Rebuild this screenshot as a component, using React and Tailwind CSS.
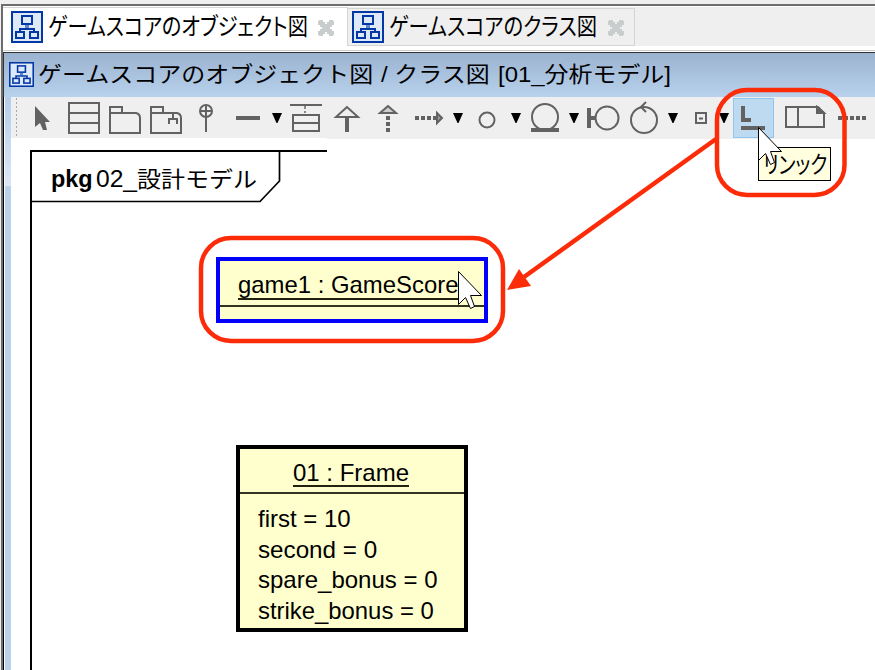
import { useLayoutEffect, useRef, useState } from "react";

const JP = "font-['Liberation_Sans','Noto_Sans_CJK_JP',sans-serif]";

// Stretches a single line of text to a given advance width.
function Fit({ w, className = "", children }) {
  const ref = useRef(null);
  const [s, setS] = useState(1);
  useLayoutEffect(() => {
    setS(w / ref.current.offsetWidth);
  }, [w]);
  return (
    <span className="block shrink-0" style={{ width: w }}>
      <span
        ref={ref}
        className={`inline-block origin-left whitespace-pre ${className}`}
        style={{ transform: `scaleX(${s})` }}
      >
        {children}
      </span>
    </span>
  );
}

function DiagramIcon({ className }) {
  return (
    <svg viewBox="0 0 32 32" className={`shrink-0 ${className}`} fill="none" stroke="#0238a5">
      <rect x="1" y="1" width="30" height="30" fill="#dde8f8" strokeWidth="2" />
      <rect x="11" y="5" width="10" height="8" strokeWidth="2" />
      <path d="M16 14v3" stroke="#5f86cc" strokeWidth="4" />
      <path d="M9 21v-3h14v3" strokeWidth="2" />
      <rect x="5" y="21" width="8" height="6" strokeWidth="2" />
      <rect x="19" y="21" width="8" height="6" strokeWidth="2" />
    </svg>
  );
}

function Close() {
  return (
    <svg viewBox="0 0 16 16" className="h-4 w-4 shrink-0" fill="#c9cdcd">
      <path d="M1 0h4v2h2v2h2V2h2V0h4v1h1v4h-2v2h-2v2h2v2h2v4h-1v1h-4v-2H9v-2H7v2H5v2H1v-1H0v-4h2V9h2V7H2V5H0V1h1z" />
    </svg>
  );
}

// A slice of the tool bar; shapes use window coordinates.
function Tool({ x, w, children }) {
  return (
    <svg
      width={w}
      height="42"
      viewBox={`${x} 97 ${w} 42`}
      className="shrink-0"
      fill="none"
      stroke="#626262"
      strokeWidth="2"
    >
      {children}
    </svg>
  );
}

function Caret({ x }) {
  return <path d={`M${x - 5} 113h10l-4.5 10h-1z`} fill="#000" stroke="none" />;
}

function Pointer({ className }) {
  return (
    <svg viewBox="0 0 26 40" className={className}>
      <path d="M1.500 1.500v33l7-7 5 11 4-2-4-11h11z" fill="#fff" stroke="#000" strokeWidth="1" />
    </svg>
  );
}

export default function App() {
  return (
    <div className={`relative flex h-[670px] w-[875px] flex-col overflow-hidden bg-[#efefef] pt-1 ${JP} text-black`}>
      <div className="ml-px flex min-h-0 flex-1 flex-col border-l-2 border-t-2 border-[#6d6d6d]">
        <div className="flex h-[47px] shrink-0 flex-col border-b border-b-[#333]">
          <div className="flex h-[40px] items-end border-t border-t-white">
            <div className="flex h-[39px] w-[345px] items-center border-r border-t border-[#d4d4d4] bg-white pl-2">
              <DiagramIcon className="-mt-px h-8 w-8" />
              <div className="ml-[5px]">
                <Fit w={260} className="text-[24px] leading-9 [font-feature-settings:'palt']">ゲームスコアのオブジェクト図</Fit>
              </div>
              <div className="ml-[10px] pt-px"><Close /></div>
            </div>
            <div className="flex h-[38px] w-[287px] items-center border-b border-r border-t border-[#d4d4d4] pl-1">
              <DiagramIcon className="h-8 w-8" />
              <div className="ml-[5px]">
                <Fit w={208} className="text-[24px] leading-9 [font-feature-settings:'palt']">ゲームスコアのクラス図</Fit>
              </div>
              <div className="ml-[11px] pt-[2px]"><Close /></div>
            </div>
          </div>
          <div className="h-1 bg-white" />
          <div className="h-px bg-[#cfcfcf]" />
          <div className="flex-1 bg-white" />
        </div>
        <div className="flex h-11 shrink-0 items-center border-l border-l-[#333] bg-linear-to-b from-[#9bb3d0] to-[#b8d1ec] pl-[5px]">
          <DiagramIcon className="-mt-px h-[25px] w-[25px]" />
          <div className="ml-1">
            <Fit w={335} className="text-[22px] leading-9">ゲームスコアのオブジェクト図</Fit>
          </div>
          <div className="ml-[8px]">
            <Fit w={109} className="text-[22px] leading-9">/ クラス図</Fit>
          </div>
          <div className="ml-[8px]">
            <Fit w={173} className="text-[22px] leading-9">[01_分析モデル]</Fit>
          </div>
        </div>
        <div className="flex min-h-0 flex-1 border-l border-l-black bg-white">
          <div className="ml-px w-[6px] shrink-0 bg-[#bad1ea]">
            <div className="h-[89px] bg-linear-to-b from-[#b3cdea] to-[#dce8f8]" />
          </div>
          <div className="flex flex-1 flex-col">
            <div className="flex h-[42px] shrink-0 bg-[#efefef]">
              <Tool x={11} w={49}>
                <path d="M16.5 98v41" strokeWidth="1" stroke="#aaa" strokeDasharray="2 2" />
                <path d="M35 106v21l5-4 3 7h4l-2-8h5z" fill="#626262" stroke="none" />
              </Tool>
              <Tool x={60} w={44}>
                <path d="M69 103h30v30H69zM69 113h30M69 123h30" />
              </Tool>
              <Tool x={104} w={42}>
                <path d="M110 133v-26h12v6h14q4 1 4 5v15zM110 113h12" />
              </Tool>
              <Tool x={146} w={44}>
                <path d="M151 133v-26h12v6h14q4 1 4 5v15zM151 113h12M169 124v-5h8v5M173 119v-6" />
              </Tool>
              <Tool x={190} w={40}>
                <circle cx="206" cy="111" r="6" />
                <path d="M206 105v27M200 111h12" />
              </Tool>
              <Tool x={230} w={56}>
                <path d="M236 118h24" strokeWidth="4" />
                <Caret x={277} />
              </Tool>
              <Tool x={286} w={44}>
                <path d="M290 105h32M293 115h26v16h-26zM293 123h26" />
                <path d="M305 106v7" strokeDasharray="3 2" stroke="#888" />
              </Tool>
              <Tool x={330} w={36}>
                <path d="M347 107l-11 10h22z" />
                <path d="M347 118v14" strokeWidth="4" />
              </Tool>
              <Tool x={366} w={40}>
                <path d="M388 106l-8 7h16z" fill="#ccc" />
                <path d="M388 116v16" strokeWidth="4" strokeDasharray="4 2" />
              </Tool>
              <Tool x={406} w={62}>
                <path d="M415 118h22" strokeWidth="4" strokeDasharray="4 2" />
                <path d="M437 113l5 5-5 5z" fill="#999" />
                <Caret x={458} />
              </Tool>
              <Tool x={468} w={58}>
                <circle cx="487" cy="120" r="7.5" />
                <Caret x={516} />
              </Tool>
              <Tool x={526} w={58}>
                <circle cx="545" cy="117" r="13" />
                <path d="M531 130h28" strokeWidth="4" />
                <Caret x={574} />
              </Tool>
              <Tool x={584} w={40}>
                <circle cx="607" cy="118" r="11.5" />
                <path d="M589 108v20M589 118h7" strokeWidth="4" />
              </Tool>
              <Tool x={624} w={60}>
                <circle cx="644" cy="120" r="13" />
                <path d="M646 102l-5 5 5 5" />
                <Caret x={673} />
              </Tool>
              <Tool x={684} w={49}>
                <path d="M696 113h10v10h-10zM699 118.500h4" />
                <Caret x={724} />
              </Tool>
              <Tool x={733} w={41}>
                <rect x="733.5" y="98.500" width="40" height="39" fill="#bedaf1" stroke="#90c5f2" strokeWidth="1" />
                <path d="M743 106v14h8" strokeWidth="4" />
                <path d="M741 128h24" strokeWidth="4" />
              </Tool>
              <Tool x={774} w={60}>
                <path d="M786 107h32l6 6v14h-38zM798 107v20" />
                <path d="M817 107v6h7z" fill="#626262" />
              </Tool>
              <Tool x={834} w={41}>
                <path d="M838 118h28" strokeWidth="4" strokeDasharray="4 2" />
              </Tool>
            </div>
            <div className="relative flex-1 bg-white">
              <div className="absolute left-0 -top-px h-px w-[316px] bg-white" />
              {/* package frame */}
              <svg viewBox="30 139 300 531" width="300" height="531" className="absolute left-[19px] top-0" fill="none" stroke="#000" strokeWidth="2">
                <path d="M327 151H31V670" />
                <path d="M31 201.500H260L279.500 181V152" strokeWidth="1.700" />
              </svg>
              <div className="absolute left-[40px] top-[22px] flex items-center leading-9">
                <Fit w={42} className="text-[24px] font-bold">pkg</Fit>
                <div className="ml-[3px]"><Fit w={41} className="text-[24px]">02_</Fit></div>
                <Fit w={120} className="text-[22px]">設計モデル</Fit>
              </div>
              {/* game score object */}
              <div className="absolute left-[205px] top-[118px] h-[66px] w-[272px] border-4 border-[#0000fb] bg-[#ffffce]">
                <div className="h-[46px] border-b-2 border-[#333322] pl-[18px] pt-[8px]">
                  <div className="h-[31px] w-[222px] border-b-2 border-[#222211]">
                    <Fit w={220} className="text-[24px] leading-[32px]">game1 : GameScore</Fit>
                  </div>
                </div>
              </div>
              {/* frame object */}
              <div className="absolute left-[225px] top-[306px] h-[187px] w-[232px] border-4 border-black bg-[#ffffce]">
                <div className="flex h-[45px] justify-center border-b-2 border-[#333322] pt-[7px]">
                  <div className="-ml-[2px] h-[31px] border-b-2 border-[#222211]">
                    <Fit w={116} className="text-[24px] leading-[33px]">01 : Frame</Fit>
                  </div>
                </div>
                <div className="flex flex-col pl-[18px] pt-[10px] text-[24px] leading-[30.500px]">
                  <Fit w={93}>first = 10</Fit>
                  <Fit w={119}>second = 0</Fit>
                  <Fit w={179}>spare_bonus = 0</Fit>
                  <Fit w={176}>strike_bonus = 0</Fit>
                </div>
              </div>
              <div className="absolute left-[747px] top-[8px] h-[34px] w-[73px] overflow-hidden border border-black bg-[#ffffdf] pl-[4px]">
                <Fit w={64} className="text-[24px] leading-[34px] [font-feature-settings:'palt']">リンック</Fit>
              </div>
            </div>
          </div>
        </div>
      </div>
      {/* annotations and pointers */}
      <svg viewBox="0 0 875 670" className="absolute inset-0 h-full w-full" fill="none" stroke="#fc2c09" strokeWidth="4.500">
        <rect x="201" y="238" width="302" height="103" rx="30" />
        <rect x="717" y="90" width="127.500" height="105" rx="30" />
        <path d="M716 139L524 277" />
        <path d="M507 290l12-21 12 17z" fill="#fc2c09" stroke="none" />
      </svg>
      <Pointer className="absolute left-[457px] top-[270px] h-[40px] w-[26px]" />
      <Pointer className="absolute left-[757px] top-[126px] h-[40px] w-[26px]" />
    </div>
  );
}
